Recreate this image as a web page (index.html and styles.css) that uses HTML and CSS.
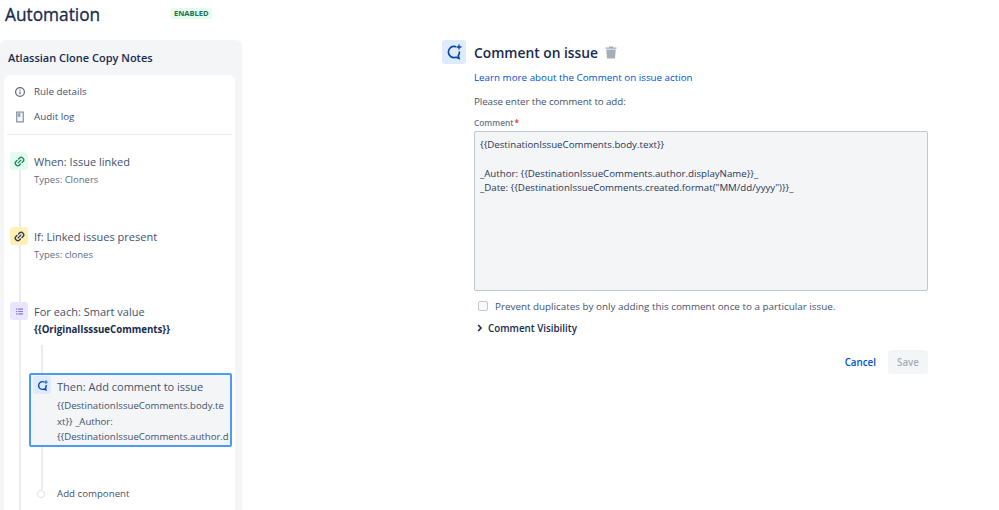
FILE: index.html
```html
<!DOCTYPE html>
<html lang="en">
<head>
    <meta charset="UTF-8">
    <title>Automation</title>
    <link rel="stylesheet" href="styles.css">
</head>
<body>
    <div class="page">
        <div class="left">
            <div class="top">
                <h1>Automation</h1>
                <span class="lozenge">ENABLED</span>
            </div>
            <div class="panel">
                <h2>Atlassian Clone Copy Notes</h2>
                <div class="card">
                    <div class="menu">
                        <div class="menu_row">
                            <svg width="12" height="12" viewBox="0 0 12 12" fill="none" stroke="#5e6c84" stroke-width="1.2"><circle cx="6" cy="6" r="4.4"/><path d="M6 5.4v2.8M6 3.4v1"/></svg>
                            <span>Rule details</span>
                        </div>
                        <div class="menu_row">
                            <svg width="12" height="12" viewBox="0 0 12 12"><path d="M2.2 0.5h7.6v11H2.2z" fill="#7a869a"/><path d="M3.3 1.6h5.4v8.8H3.3z" fill="#f4f5f7"/><path d="M3.8 2.2h2.6v3.6H3.8z" fill="#97a0af"/></svg>
                            <span>Audit log</span>
                        </div>
                    </div>
                    <div class="flow">
                        <div class="line"></div>
                        <div class="step step_when">
                            <div class="ico ico_green">
                                <svg width="11" height="11" viewBox="0 0 12 12" fill="none" stroke="#1f845a" stroke-width="1.5" stroke-linecap="round"><path d="M5 3.2l1.3-1.3a2 2 0 0 1 2.9 0l.9.9a2 2 0 0 1 0 2.9L8.8 7"/><path d="M7 8.8l-1.3 1.3a2 2 0 0 1-2.9 0l-.9-.9a2 2 0 0 1 0-2.9L3.2 5"/><path d="M4.5 7.5l3-3"/></svg>
                            </div>
                            <div class="step_text">
                                <p class="step_title">When: Issue linked</p>
                                <p class="step_sub">Types: Cloners</p>
                            </div>
                        </div>
                        <div class="step step_if">
                            <div class="ico ico_yellow">
                                <svg width="11" height="11" viewBox="0 0 12 12" fill="none" stroke="#253858" stroke-width="1.5" stroke-linecap="round"><path d="M5 3.2l1.3-1.3a2 2 0 0 1 2.9 0l.9.9a2 2 0 0 1 0 2.9L8.8 7"/><path d="M7 8.8l-1.3 1.3a2 2 0 0 1-2.9 0l-.9-.9a2 2 0 0 1 0-2.9L3.2 5"/><path d="M4.5 7.5l3-3"/></svg>
                            </div>
                            <div class="step_text">
                                <p class="step_title">If: Linked issues present</p>
                                <p class="step_sub">Types: clones</p>
                            </div>
                        </div>
                        <div class="step step_each">
                            <div class="ico ico_purple">
                                <svg width="7" height="7" viewBox="0 0 7 7" fill="#8777d9"><path d="M0 0.5h1.4v1.2H0zM0 2.9h1.4v1.2H0zM0 5.3h1.4v1.2H0zM2.2 0.5H7v1.2H2.2zM2.2 2.9H7v1.2H2.2zM2.2 5.3H7v1.2H2.2z"/></svg>
                            </div>
                            <div class="step_text">
                                <p class="step_title">For each: Smart value</p>
                                <p class="step_bold">{{OriginalIsssueComments}}</p>
                            </div>
                        </div>
                        <div class="nested">
                            <div class="line2"></div>
                            <div class="then">
                                <div class="ico ico_blue">
                                    <svg width="11" height="11" viewBox="0 0 16 16" fill="none" stroke="#0747a6" stroke-width="2" stroke-linecap="round"><path d="M9.5 2.6A5.6 5.6 0 1 0 10 13.2l3 1.1-.7-2.6a5.6 5.6 0 0 0 1.1-3.7"/><path d="M13 1v4M11 3h4" stroke-width="1.3"/></svg>
                                </div>
                                <div class="then_text">
                                    <p class="step_title">Then: Add comment to issue</p>
                                    <p class="then_body">{{DestinationIssueComments.body.te<br>xt}} _Author:<br>{{DestinationIssueComments.author.d</p>
                                </div>
                            </div>
                            <div class="add">
                                <span class="dot"></span>
                                <span>Add component</span>
                            </div>
                        </div>
                    </div>
                </div>
            </div>
        </div>
        <div class="right">
            <div class="head">
                <div class="head_ico">
                    <svg width="16" height="16" viewBox="0 0 16 16" fill="none" stroke="#0747a6" stroke-width="1.7" stroke-linecap="round"><path d="M9.5 2.6A5.6 5.6 0 1 0 10 13.2l3 1.1-.7-2.6a5.6 5.6 0 0 0 1.1-3.7"/><path d="M13 1v4M11 3h4" stroke-width="1.3"/></svg>
                </div>
                <h3>Comment on issue</h3>
                <svg class="trash" width="12" height="13" viewBox="0 0 12 13" fill="#a5adba"><path d="M0.5 1.6h11v1.2H0.5zM4 0.4h4v1.2H4zM1.3 3.4h9.4l-.7 9.2H2z"/></svg>
            </div>
            <div class="content">
                <a class="learn" href="#">Learn more about the Comment on issue action</a>
                <p class="please">Please enter the comment to add:</p>
                <p class="label">Comment<span class="req">*</span></p>
                <div class="area">
                    <p>{{DestinationIssueComments.body.text}}</p>
                    <p class="gap">_Author: {{DestinationIssueComments.author.displayName}}_</p>
                    <p>_Date: {{DestinationIssueComments.created.format("MM/dd/yyyy")}}_</p>
                </div>
                <div class="check">
                    <span class="box"></span>
                    <span>Prevent duplicates by only adding this comment once to a particular issue.</span>
                </div>
                <div class="visibility">
                    <svg width="6" height="8" viewBox="0 0 6 8" fill="none" stroke="#172b4d" stroke-width="1.6"><path d="M1.2 1l2.8 3-2.8 3"/></svg>
                    <span>Comment Visibility</span>
                </div>
                <div class="actions">
                    <button class="cancel">Cancel</button>
                    <button class="save">Save</button>
                </div>
            </div>
        </div>
    </div>
</body>
</html>
```

FILE: styles.css
```css
html, body {
    margin: 0;
    height: 510px;
    overflow: hidden;
    background: #fff;
    font-family: "Open Sans", "Noto Sans", Arial, sans-serif;
    color: #42526e;
    font-size: 9.8px;
}
p, h1, h2, h3 {
    margin: 0;
}
.page {
    display: flex;
    height: 510px;
}
.left {
    width: 242px;
    flex: none;
    display: flex;
    flex-direction: column;
    overflow: hidden;
}
.top {
    height: 40px;
    flex: none;
    display: flex;
    padding-left: 5px;
    box-sizing: border-box;
}
.top h1 {
    width: 166px;
    margin-top: 2px;
    font-size: 17.3px;
    line-height: 26px;
    font-weight: 400;
    color: #172b4d;
    -webkit-text-stroke: 0.3px #172b4d;
}
.lozenge {
    height: 11px;
    margin-top: 8px;
    padding: 0 3px;
    background: #e3fcef;
    color: #216e4e;
    border-radius: 2px;
    font-size: 7.5px;
    line-height: 11px;
    font-weight: 700;
}
.panel {
    flex: 1;
    background: #f4f5f7;
    border-radius: 6px 6px 0 0;
    padding-left: 4px;
    padding-right: 7px;
    display: flex;
    flex-direction: column;
    min-height: 0;
}
.panel h2 {
    height: 35px;
    flex: none;
    padding-left: 4px;
    font-size: 11px;
    line-height: 35px;
    font-weight: 600;
    color: #172b4d;
}
.card {
    flex: 1;
    background: #fff;
    border-radius: 6px 6px 0 0;
    min-height: 0;
    display: flex;
    flex-direction: column;
}
.menu {
    margin: 0 3px;
    padding-top: 4px;
    height: 55px;
    border-bottom: 1px solid #ebecf0;
}
.menu_row {
    display: flex;
    align-items: center;
    gap: 8px;
    height: 25px;
    padding-left: 7px;
}
.flow {
    position: relative;
    flex: 1;
    padding-top: 17px;
}
.line {
    position: absolute;
    left: 15px;
    top: 20px;
    bottom: 0;
    width: 2px;
    background: #ebecf0;
}
.step {
    position: relative;
    display: flex;
    gap: 6px;
    padding-left: 6px;
    height: 75px;
}
.step_text {
    padding-top: 1px;
}
.ico {
    width: 18px;
    height: 18px;
    flex: none;
    border-radius: 3px;
    display: flex;
    align-items: center;
    justify-content: center;
}
.ico_green { background: #e3fcef; }
.ico_yellow { background: #fff0b3; }
.ico_purple { background: #eae6ff; }
.ico_blue { background: #deebff; }
.step_title {
    font-size: 11px;
    line-height: 18px;
    color: #42526e;
}
.step_sub {
    font-size: 9.5px;
    line-height: 17px;
    color: #5e6c84;
}
.step_bold {
    font-size: 9.7px;
    line-height: 17px;
    font-weight: 700;
    color: #172b4d;
}
.nested {
    position: relative;
    margin-top: -32px;
    padding-top: 28px;
}
.line2 {
    position: absolute;
    left: 37px;
    top: 0;
    height: 145px;
    width: 2px;
    background: #ebecf0;
}
.then {
    position: relative;
    margin-left: 25px;
    width: 203px;
    height: 74px;
    box-sizing: border-box;
    border: 2px solid #4c9aff;
    border-radius: 2px;
    background: #f4f5f7;
    padding: 1px 2px;
    display: flex;
    gap: 6px;
}
.then_text {
    min-width: 0;
    padding-top: 2px;
}
.then_body {
    margin-top: 2px;
    font-size: 9.6px;
    line-height: 15.5px;
    white-space: nowrap;
    color: #42526e;
}
.add {
    position: relative;
    display: flex;
    align-items: center;
    gap: 12px;
    margin: 40px 0 0 33px;
    font-size: 9.7px;
}
.dot {
    width: 6px;
    height: 6px;
    flex: none;
    border: 1px solid #dfe1e6;
    border-radius: 50%;
    background: #fff;
}
.right {
    flex: 1;
    padding: 40px 0 0 200px;
}
.head {
    display: flex;
    align-items: center;
    height: 24px;
}
.head_ico {
    width: 24px;
    height: 24px;
    margin-right: 8px;
    border-radius: 3px;
    background: #deebff;
    display: flex;
    align-items: center;
    justify-content: center;
}
.head h3 {
    font-size: 13.8px;
    font-weight: 600;
    color: #172b4d;
}
.trash {
    margin-left: 7px;
}
.content {
    margin-left: 32px;
    width: 454px;
}
.learn {
    display: block;
    margin-top: 7px;
    font-size: 9.8px;
    line-height: 14px;
    color: #0052cc;
    text-decoration: none;
}
.please {
    margin-top: 10px;
    font-size: 9.8px;
    letter-spacing: -0.1px;
    line-height: 14px;
    color: #42526e;
}
.label {
    margin-top: 8px;
    font-size: 8.3px;
    line-height: 11px;
    font-weight: 600;
    color: #6b778c;
}
.req {
    color: #de350b;
    margin-left: 1px;
}
.area {
    margin-top: 3px;
    height: 160px;
    box-sizing: border-box;
    border: 1px solid #c1c7d0;
    border-radius: 2px;
    background: #f4f5f7;
    padding: 6px 5px;
    font-size: 9.7px;
    line-height: 14px;
    color: #253858;
}
.gap {
    margin-top: 15px;
}
.check {
    display: flex;
    align-items: center;
    gap: 7px;
    margin: 8px 0 0 4px;
    height: 14px;
    font-size: 9.85px;
}
.box {
    width: 8px;
    height: 8px;
    border: 1px solid #c1c7d0;
    border-radius: 2px;
    background: #fafbfc;
}
.visibility {
    display: flex;
    align-items: center;
    gap: 5px;
    margin: 8px 0 0 3px;
    height: 14px;
    font-size: 9.8px;
    font-weight: 600;
    color: #172b4d;
}
.actions {
    display: flex;
    justify-content: flex-end;
    align-items: center;
    gap: 12px;
    margin-top: 15px;
}
button {
    border: none;
    font-family: inherit;
    font-size: 9.8px;
    font-weight: 600;
    padding: 0;
    height: 24px;
    border-radius: 3px;
    background: none;
}
.cancel {
    color: #0052cc;
}
.save {
    width: 40px;
    background: #f4f5f7;
    color: #a5adba;
}
```
